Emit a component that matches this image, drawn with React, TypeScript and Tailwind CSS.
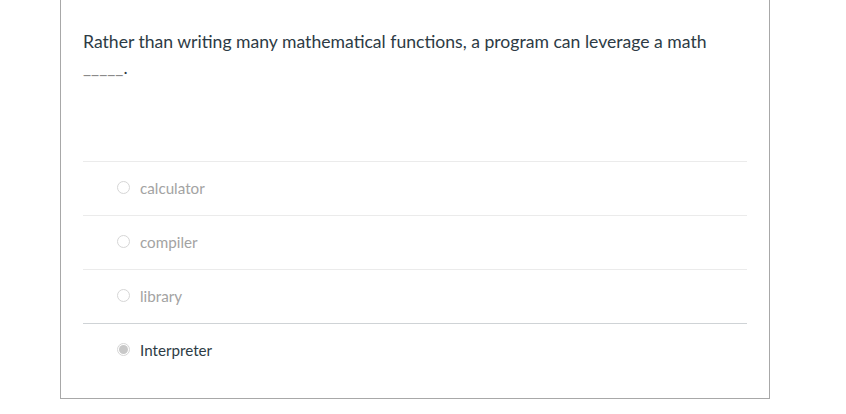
import React from "react";

const options = [
  { label: "calculator", selected: false },
  { label: "compiler", selected: false },
  { label: "library", selected: false },
  { label: "Interpreter", selected: true },
];

export default function App() {
  return (
    <div className="w-[846px] h-[414px] bg-white" style={{ fontFamily: "Lato, 'Open Sans', sans-serif" }}>
      <div className="ml-[60px] w-[710px] h-[399px] border-x border-b border-[#a8a8a8] px-[22px] pt-[29px]">
        <div className="text-[17.6px] leading-[26px] text-[#2d3b45] pr-[20px]">
          Rather than writing many mathematical functions, a program can leverage a math
          <br />
          <span className="text-[#8a8a8a]">_____</span>.
        </div>
        <div className="mt-[80px]">
          {options.map((o, i) => (
            <div
              key={o.label}
              className={`h-[54px] flex items-center border-t ${i === 3 ? "border-[#cfd3d6]" : "border-[#ebebeb]"}`}
            >
              <div className="ml-[34px] mb-[2px] w-[13px] h-[13px] rounded-full border border-[#d6d6d6] bg-white flex items-center justify-center">
                {o.selected && <div className="w-[9px] h-[9px] rounded-full bg-[#c8c8c8]" />}
              </div>
              <span
                className={`ml-[10px] pb-[2px] text-[15.2px] leading-[20px] ${o.selected ? "text-[#2d3b45]" : "text-[#a3a3a3]"}`}
              >
                {o.label}
              </span>
            </div>
          ))}
        </div>
      </div>
    </div>
  );
}
